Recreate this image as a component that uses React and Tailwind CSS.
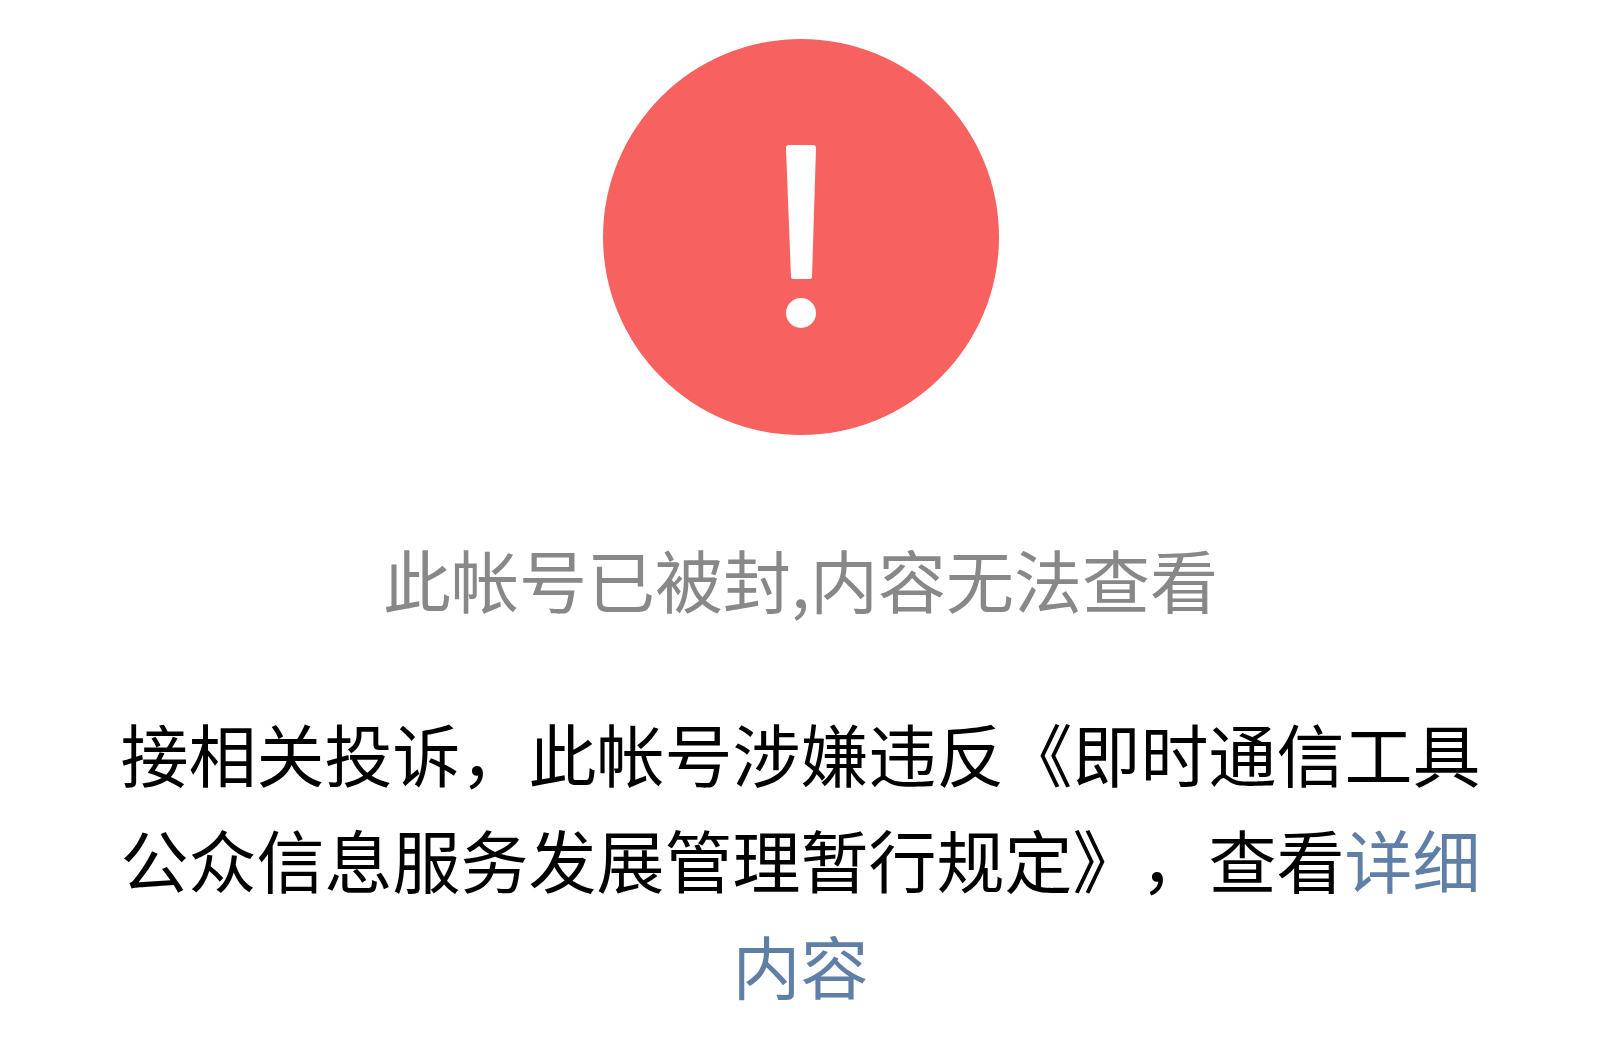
function WarnIcon() {
    return (
        <svg viewBox="0 0 396 396" className="w-[396px] h-[396px]" aria-hidden="true">
            <circle cx="198" cy="198" r="198" fill="#f76260" />
            <path
                fill="#fff"
                d="M186 106h24q3 0 3 3l-4 129q0 2-2 2h-17q-2 0-2-2l-5-129q0-3 3-3z"
            />
            <circle cx="198" cy="274" r="15" fill="#fff" />
        </svg>
    )
}

export default function App() {
    return (
        <main
            lang="zh-CN"
            className="min-h-screen bg-white pl-[118px] pr-[116px] pt-[39px] flex flex-col items-center text-center text-[68px] leading-[106px] font-normal [text-spacing-trim:space-all] font-['Noto_Sans_CJK_SC',sans-serif]"
        >
            <WarnIcon />
            <h1 className="mt-[91px] text-[#888888]">
                此帐号已被封,内容无法查看
            </h1>
            <p className="mt-[68px] text-black">
                接相关投诉，此帐号涉嫌违反《即时通信工具公众信息服务发展管理暂行规定》，查看
                <a href="#detail" className="text-[#607fa6]">详细内容</a>
            </p>
        </main>
    )
}
